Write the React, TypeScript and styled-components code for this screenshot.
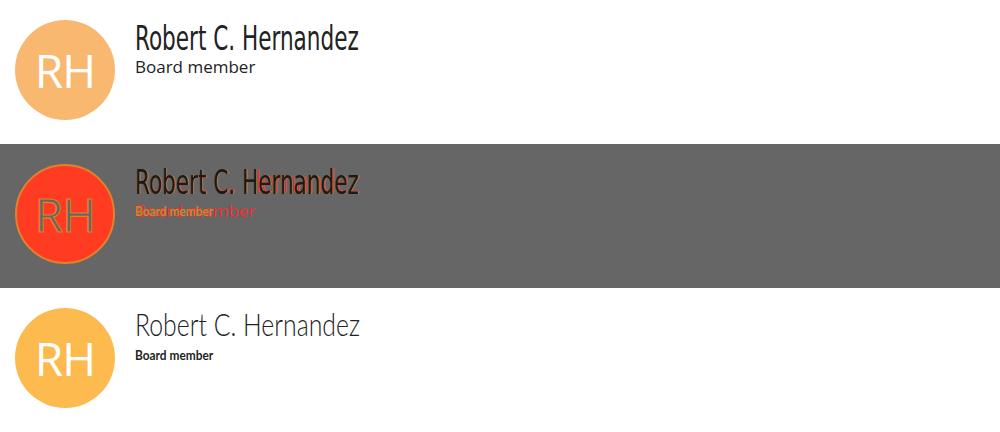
import React from "react";
import styled, { createGlobalStyle } from "styled-components";

const GlobalStyle = createGlobalStyle`
  html, body {
    margin: 0;
    padding: 0;
    background: #ffffff;
  }
  body {
    font-family: "Open Sans", "DejaVu Sans", sans-serif;
  }
`;

type Variant = "oswald" | "diff" | "fira";

const people = [
  { initials: "RH", name: "Robert C. Hernandez", role: "Board member" },
];

export default function App() {
  const person = people[0];
  return (
    <>
      <GlobalStyle />
      <List>
        <Row $variant="oswald">
          <Avatar $variant="oswald">{person.initials}</Avatar>
          <Info>
            <CondensedName>{person.name}</CondensedName>
            <OpenRole>{person.role}</OpenRole>
          </Info>
        </Row>

        <Row $variant="diff">
          <Avatar $variant="diff">
            <DiffInitials>{person.initials}</DiffInitials>
          </Avatar>
          <Info>
            <Stack>
              <LightName $tone="red">{person.name}</LightName>
              <CondensedName $tone="ghost">{person.name}</CondensedName>
            </Stack>
            <Stack>
              <OpenRole $tone="red">{person.role}</OpenRole>
              <BoldRole $tone="orange">{person.role}</BoldRole>
            </Stack>
          </Info>
        </Row>

        <Row $variant="fira">
          <Avatar $variant="fira">{person.initials}</Avatar>
          <Info>
            <LightName>{person.name}</LightName>
            <BoldRole>{person.role}</BoldRole>
          </Info>
        </Row>
      </List>
    </>
  );
}

const List = styled.div`
  display: flex;
  flex-direction: column;
  width: 1000px;
`;

const Row = styled.div<{ $variant: Variant }>`
  height: 144px;
  box-sizing: border-box;
  padding: 20px 15px;
  display: flex;
  align-items: flex-start;
  gap: 20px;
  background: ${({ $variant }) => ($variant === "diff" ? "#666666" : "#ffffff")};
`;

const Avatar = styled.div<{ $variant: Variant }>`
  width: 100px;
  height: 100px;
  box-sizing: border-box;
  border-radius: 50%;
  flex-shrink: 0;
  display: flex;
  align-items: center;
  justify-content: center;
  font-family: "Open Sans", sans-serif;
  font-size: 46px;
  color: #ffffff;
  letter-spacing: -1px;
  background: ${({ $variant }) =>
    $variant === "oswald"
      ? "#f9b86f"
      : $variant === "diff"
      ? "#ff3c22"
      : "#fdba4e"};
  border: ${({ $variant }) =>
    $variant === "diff" ? "2px solid #e0822c" : "none"};
`;

const DiffInitials = styled.span`
  color: #666666;
  -webkit-text-stroke: 1.2px #e0822c;
`;

const Info = styled.div`
  display: flex;
  flex-direction: column;
`;

const Stack = styled.div`
  display: grid;
  & > * {
    grid-area: 1 / 1;
  }
`;

const toneColor = (tone?: string) =>
  tone === "red"
    ? "rgba(255, 40, 40, 0.9)"
    : tone === "orange"
    ? "#d9822b"
    : tone === "ghost"
    ? "#1a1a1a"
    : "#222222";

const CondensedName = styled.div<{ $tone?: string }>`
  font-family: "DejaVu Sans Condensed", "DejaVu Sans", sans-serif;
  font-weight: 400;
  font-size: 34px;
  line-height: 36px;
  height: 36px;
  white-space: nowrap;
  color: ${({ $tone }) => toneColor($tone)};
  transform: scaleX(0.705);
  transform-origin: left center;
  text-shadow: ${({ $tone }) =>
    $tone === "ghost" ? "1px 0 0 #d9822b" : "none"};
`;

const LightName = styled.div<{ $tone?: string }>`
  font-family: "Lato", sans-serif;
  font-weight: 300;
  font-size: 31px;
  line-height: 32px;
  height: 36px;
  white-space: nowrap;
  color: ${({ $tone }) => toneColor($tone)};
  transform: scaleX(0.8);
  transform-origin: left center;
`;

const OpenRole = styled.div<{ $tone?: string }>`
  font-family: "Open Sans", sans-serif;
  font-size: 17px;
  line-height: 22px;
  color: ${({ $tone }) => toneColor($tone)};
`;

const BoldRole = styled.div<{ $tone?: string }>`
  font-family: "Lato", sans-serif;
  font-weight: 700;
  font-size: 13.5px;
  line-height: 22px;
  white-space: nowrap;
  color: ${({ $tone }) => toneColor($tone)};
  transform: scaleX(0.88);
  transform-origin: left center;
`;
